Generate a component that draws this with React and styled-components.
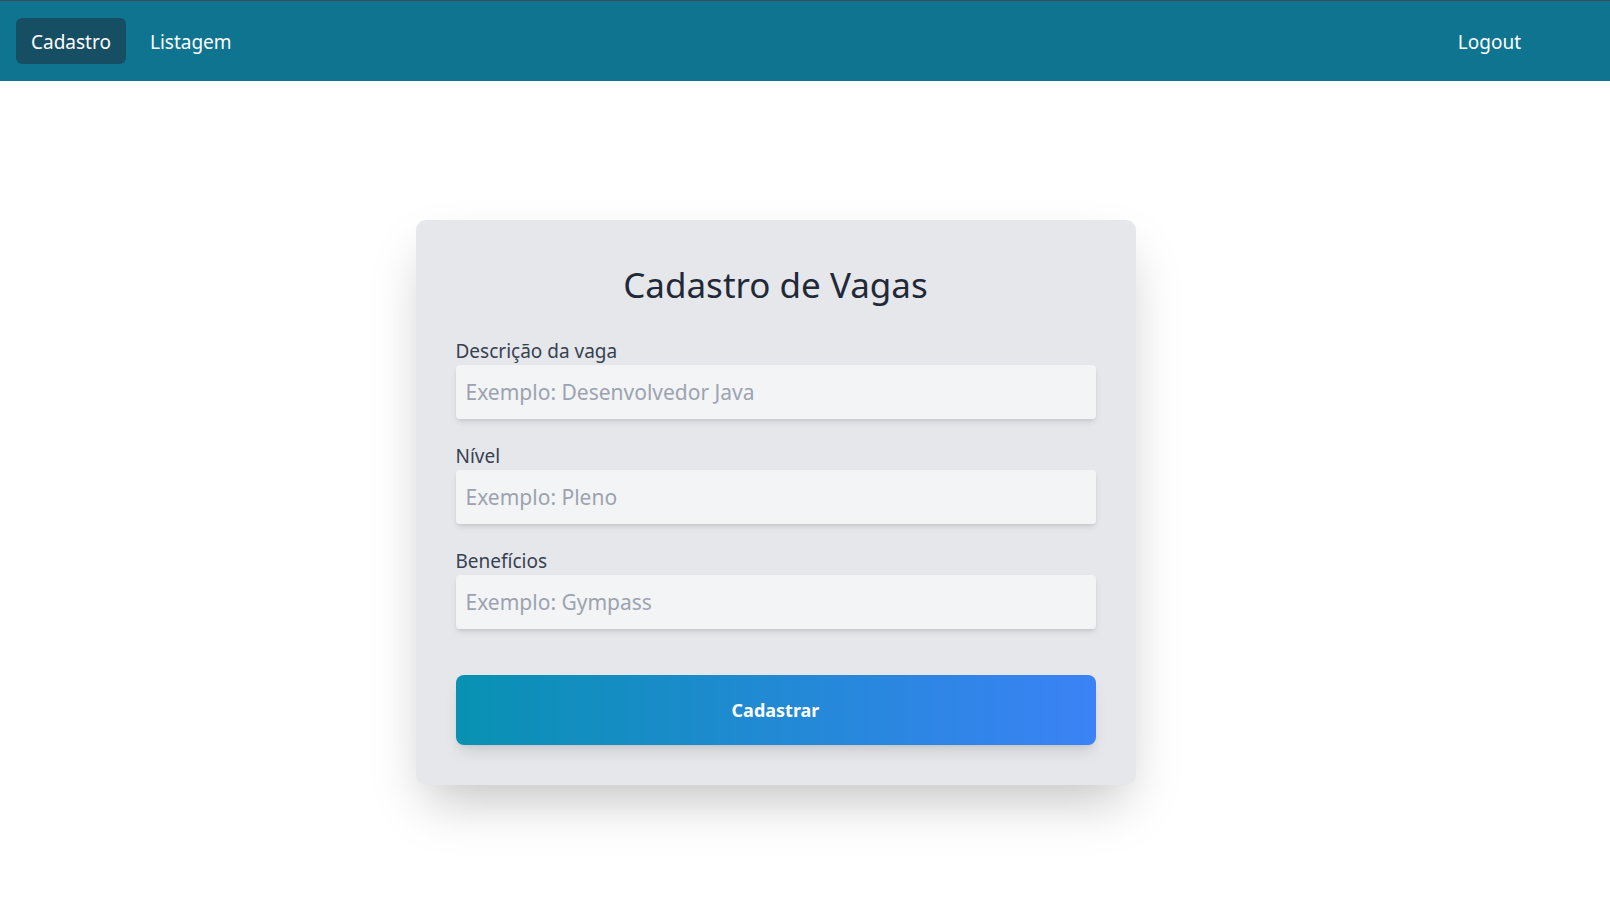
import styled, { createGlobalStyle } from 'styled-components';

const GlobalStyle = createGlobalStyle`
  * {
    box-sizing: border-box;
  }
  body {
    margin: 0;
    background: #ffffff;
    font-family: "Noto Sans", "Open Sans", sans-serif;
  }
`;

const Nav = styled.nav`
  height: 81px;
  border-top: 1px solid #3d4b53;
  background-color: #0e7490;
  display: flex;
  align-items: center;
  justify-content: space-between;
  padding: 0 74px 0 16px;
`;

const NavGroup = styled.div`
  display: flex;
  align-items: center;
  gap: 9px;
`;

const NavLink = styled.a`
  display: block;
  padding: 0 15px;
  height: 46px;
  line-height: 48px;
  border-radius: 6px;
  color: #ffffff;
  font-size: 19px;
  text-decoration: none;
  cursor: pointer;
  background-color: ${({ $active }) => ($active ? '#164e63' : 'transparent')};
`;

const Main = styled.main`
  display: flex;
  justify-content: center;
  align-items: flex-start;
  min-height: calc(100vh - 81px);
  padding: 139px 59px 80px 0;
`;

const Card = styled.div`
  width: 720px;
  padding: 40px;
  background-color: #e5e7eb;
  border-radius: 10px;
  box-shadow: 0 25px 50px -12px rgba(0, 0, 0, 0.25);
`;

const Title = styled.h1`
  margin: 5px 0 33px;
  font-size: 35px;
  line-height: 40px;
  font-weight: 400;
  text-align: center;
  color: #1f2937;
`;

const Form = styled.form`
  display: flex;
  flex-direction: column;
  gap: 24px;
`;

const Field = styled.div`
  display: flex;
  flex-direction: column;
`;

const Label = styled.label`
  font-size: 19px;
  line-height: 27px;
  color: #374151;
`;

const Input = styled.input`
  width: 100%;
  height: 54px;
  padding: 0 10px;
  border: none;
  border-radius: 4px;
  background-color: #f3f4f6;
  font-family: inherit;
  font-size: 21px;
  color: #1f2937;
  box-shadow: 0 4px 6px -1px rgba(0, 0, 0, 0.1), 0 2px 4px -2px rgba(0, 0, 0, 0.1);
  outline: none;

  &::placeholder {
    color: #9ca3af;
  }
`;

const Submit = styled.button`
  margin-top: 22px;
  height: 70px;
  border: none;
  border-radius: 8px;
  background-image: linear-gradient(to right, #0891b2, #3b82f6);
  color: #ffffff;
  font-family: inherit;
  font-size: 18px;
  font-weight: 700;
  cursor: pointer;
  box-shadow: 0 10px 15px -3px rgba(0, 0, 0, 0.1), 0 4px 6px -4px rgba(0, 0, 0, 0.1);
`;

const App = () => {
  return (
    <>
      <GlobalStyle />
      <Nav>
        <NavGroup>
          <NavLink $active>Cadastro</NavLink>
          <NavLink>Listagem</NavLink>
        </NavGroup>
        <NavLink>Logout</NavLink>
      </Nav>
      <Main>
        <Card>
          <Title>Cadastro de Vagas</Title>
          <Form onSubmit={(e) => e.preventDefault()}>
            <Field>
              <Label>Descrição da vaga</Label>
              <Input placeholder="Exemplo: Desenvolvedor Java" />
            </Field>
            <Field>
              <Label>Nível</Label>
              <Input placeholder="Exemplo: Pleno" />
            </Field>
            <Field>
              <Label>Benefícios</Label>
              <Input placeholder="Exemplo: Gympass" />
            </Field>
            <Submit type="submit">Cadastrar</Submit>
          </Form>
        </Card>
      </Main>
    </>
  );
};

export default App;
